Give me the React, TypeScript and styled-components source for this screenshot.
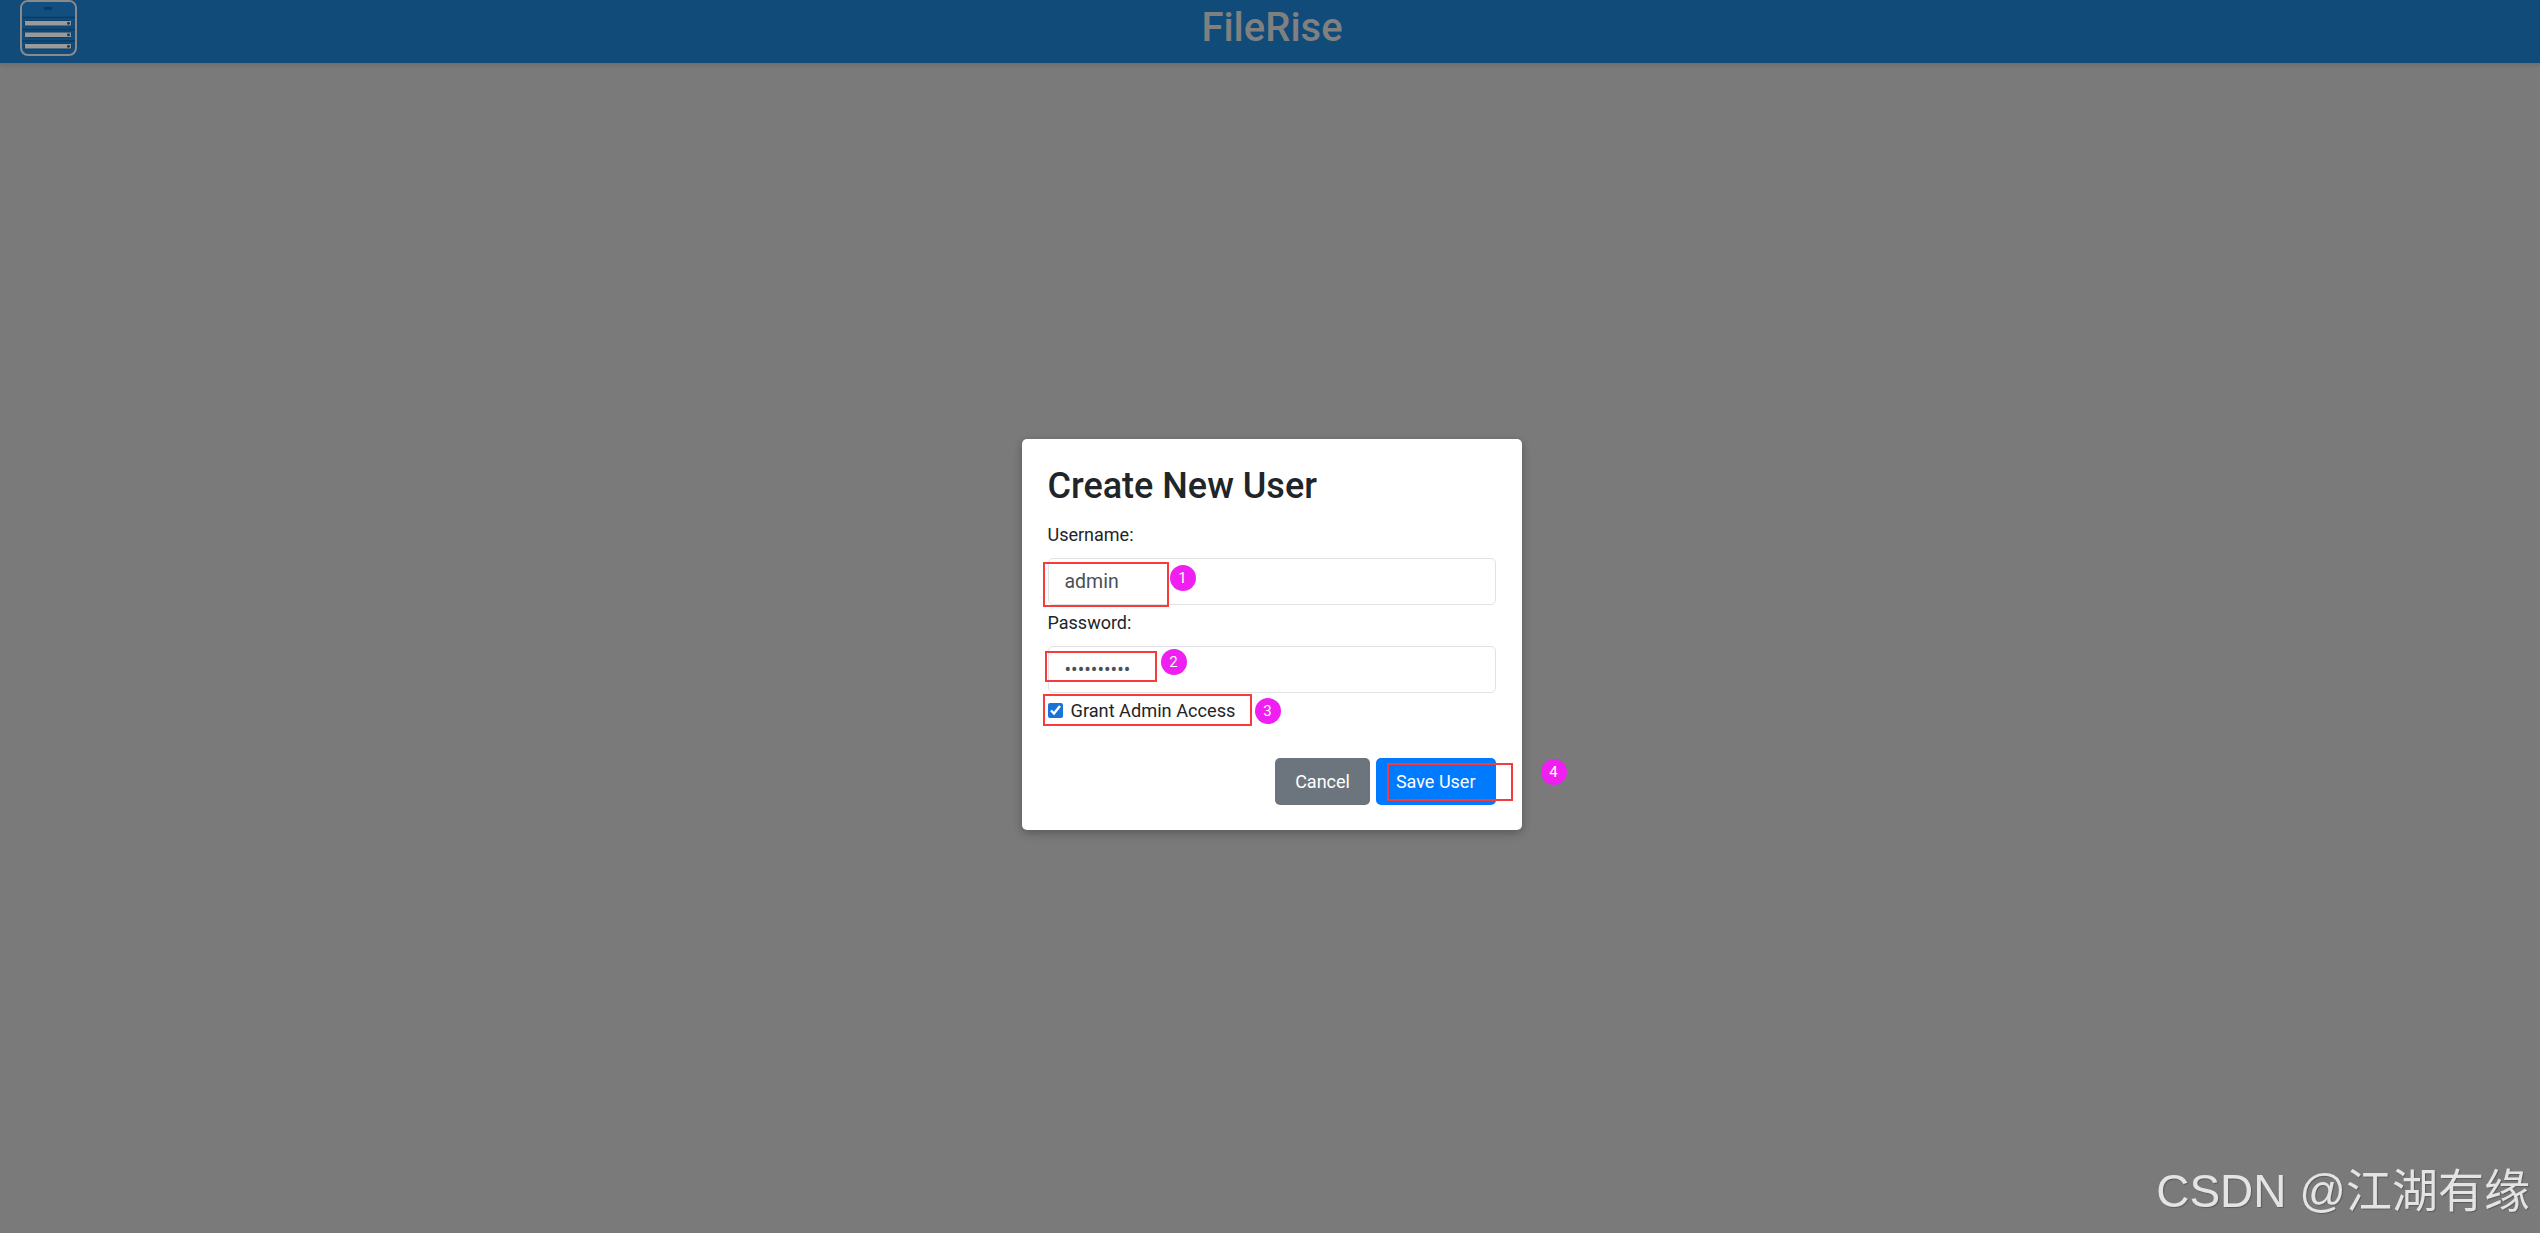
import React from "react";
import styled, { createGlobalStyle } from "styled-components";

const GlobalStyle = createGlobalStyle`
  html, body {
    margin: 0;
    padding: 0;
    background: #7a7a7a;
    font-family: Roboto, "Noto Sans", Arial, sans-serif;
    overflow: hidden;
  }
  * { box-sizing: border-box; }
`;

const Page = styled.div`
  height: 1233px;
  background: #7a7a7a;
  display: flex;
  flex-direction: column;
`;

const Header = styled.header`
  height: 63px;
  flex: none;
  background: #114b7a;
  display: grid;
  grid-template-columns: 1fr auto 1fr;
  align-items: start;
  padding: 0 15px 0 19px;
  box-shadow: 0 2px 4px rgba(0, 0, 0, 0.12);
`;

const Logo = styled.svg`
  width: 60px;
  height: 58px;
  display: block;
`;

const Title = styled.h1`
  margin: 8px 0 0;
  font-family: Roboto, sans-serif;
  font-weight: 500;
  font-size: 40px;
  line-height: 40px;
  color: #808080;
`;

const Backdrop = styled.main`
  flex: 1;
  display: flex;
  justify-content: center;
  align-items: flex-start;
  padding: 376px 0 0 3px;
`;

const Modal = styled.section`
  position: relative;
  width: 500px;
  padding: 26px 26px 25px;
  background: #ffffff;
  border-radius: 5px;
  box-shadow: 0 3px 10px rgba(0, 0, 0, 0.28);
  color: #212529;
`;

const ModalTitle = styled.h2`
  margin: 0 0 13px;
  font-family: Roboto, sans-serif;
  font-weight: 500;
  font-size: 36px;
  line-height: 1.2;
  color: #212529;
`;

const Label = styled.label`
  display: block;
  margin-bottom: 10px;
  font-size: 18px;
  line-height: 27px;
  color: #212529;
`;

const Input = styled.input`
  display: block;
  width: 100%;
  height: 47px;
  margin: 0 0 4px;
  padding: 0 16px;
  border: 1px solid #dfe3e8;
  border-radius: 5px;
  font-family: Roboto, sans-serif;
  font-size: 19.5px;
  color: #495057;
  background: #fff;
  outline: none;
`;

const CheckRow = styled.label`
  display: flex;
  align-items: center;
  gap: 8px;
  font-size: 18.2px;
  line-height: 27px;
  color: #212529;
`;

const Check = styled.input`
  width: 15px;
  height: 15px;
  margin: 0;
  accent-color: #1a73d9;
`;

const Actions = styled.div`
  display: flex;
  justify-content: flex-end;
  gap: 6px;
  margin-top: 34px;
`;

const Button = styled.button<{ $variant: "secondary" | "primary" }>`
  height: 47px;
  padding: 0 20px;
  border: none;
  border-radius: 5px;
  font-family: Roboto, sans-serif;
  font-size: 18px;
  color: #ffffff;
  background: ${(p) => (p.$variant === "primary" ? "#007bff" : "#6c757d")};
  cursor: pointer;
`;

const Mark = styled.div<{ $l: number; $t: number; $w: number; $h: number }>`
  position: absolute;
  left: ${(p) => p.$l}px;
  top: ${(p) => p.$t}px;
  width: ${(p) => p.$w}px;
  height: ${(p) => p.$h}px;
  border: 2px solid #f73b3b;
  pointer-events: none;
`;

const Badge = styled.div<{ $l: number; $t: number }>`
  position: absolute;
  left: ${(p) => p.$l}px;
  top: ${(p) => p.$t}px;
  width: 26px;
  height: 26px;
  border-radius: 50%;
  background: #ee1ff0;
  color: #ffffff;
  font-family: Roboto, sans-serif;
  font-size: 15px;
  display: flex;
  align-items: center;
  justify-content: center;
  pointer-events: none;
`;

const Watermark = styled.div`
  position: fixed;
  right: 10px;
  bottom: 19px;
  font-family: "Liberation Sans", "Noto Sans CJK SC", sans-serif;
  font-size: 46px;
  line-height: 46px;
  color: #e4e4e4;
  text-shadow: 1px 1px 1px rgba(0, 0, 0, 0.25);
  white-space: nowrap;
`;

function ServerLogo() {
  return (
    <Logo viewBox="0 0 60 58">
      <rect x="2" y="1" width="55" height="54" rx="7" fill="#124c7d" stroke="#8a8a8a" strokeWidth="2" />
      <rect x="3" y="2" width="53" height="15" rx="6" fill="#134e80" />
      <line x1="3" y1="17.5" x2="56" y2="17.5" stroke="#0c3a61" strokeWidth="1.5" />
      <rect x="25" y="7" width="8" height="3" fill="#0c3a61" />
      <rect x="5.5" y="20.5" width="47" height="5.5" rx="1" fill="#9a9a9a" stroke="#0e3f68" strokeWidth="1" />
      <circle cx="49.5" cy="23.2" r="1.5" fill="#1b3b5c" />
      <line x1="3" y1="29.5" x2="56" y2="29.5" stroke="#0c3a61" strokeWidth="1.5" />
      <rect x="5.5" y="32" width="47" height="5.5" rx="1" fill="#9a9a9a" stroke="#0e3f68" strokeWidth="1" />
      <circle cx="49.5" cy="34.7" r="1.5" fill="#1b3b5c" />
      <line x1="3" y1="41" x2="56" y2="41" stroke="#0c3a61" strokeWidth="1.5" />
      <rect x="5.5" y="43.5" width="47" height="5.5" rx="1" fill="#9a9a9a" stroke="#0e3f68" strokeWidth="1" />
      <circle cx="49.5" cy="46.2" r="1.5" fill="#1b3b5c" />
    </Logo>
  );
}

export default function App() {
  return (
    <>
      <GlobalStyle />
      <Page>
        <Header>
          <ServerLogo />
          <Title>FileRise</Title>
          <div />
        </Header>
        <Backdrop>
          <Modal>
            <ModalTitle>Create New User</ModalTitle>
            <Label htmlFor="newUsername">Username:</Label>
            <Input id="newUsername" type="text" defaultValue="admin" />
            <Label htmlFor="newPassword">Password:</Label>
            <Input id="newPassword" type="password" defaultValue="admin12345" />
            <CheckRow>
              <Check type="checkbox" defaultChecked />
              Grant Admin Access
            </CheckRow>
            <Actions>
              <Button $variant="secondary">Cancel</Button>
              <Button $variant="primary">Save User</Button>
            </Actions>

            <Mark $l={21} $t={123} $w={126} $h={45} />
            <Badge $l={148} $t={126}>1</Badge>
            <Mark $l={23} $t={212} $w={112} $h={31} />
            <Badge $l={139} $t={210}>2</Badge>
            <Mark $l={21} $t={255} $w={209} $h={32} />
            <Badge $l={233} $t={259}>3</Badge>
            <Mark $l={365} $t={324} $w={126} $h={38} />
            <Badge $l={519} $t={320}>4</Badge>
          </Modal>
        </Backdrop>
      </Page>
      <Watermark>CSDN @江湖有缘</Watermark>
    </>
  );
}
